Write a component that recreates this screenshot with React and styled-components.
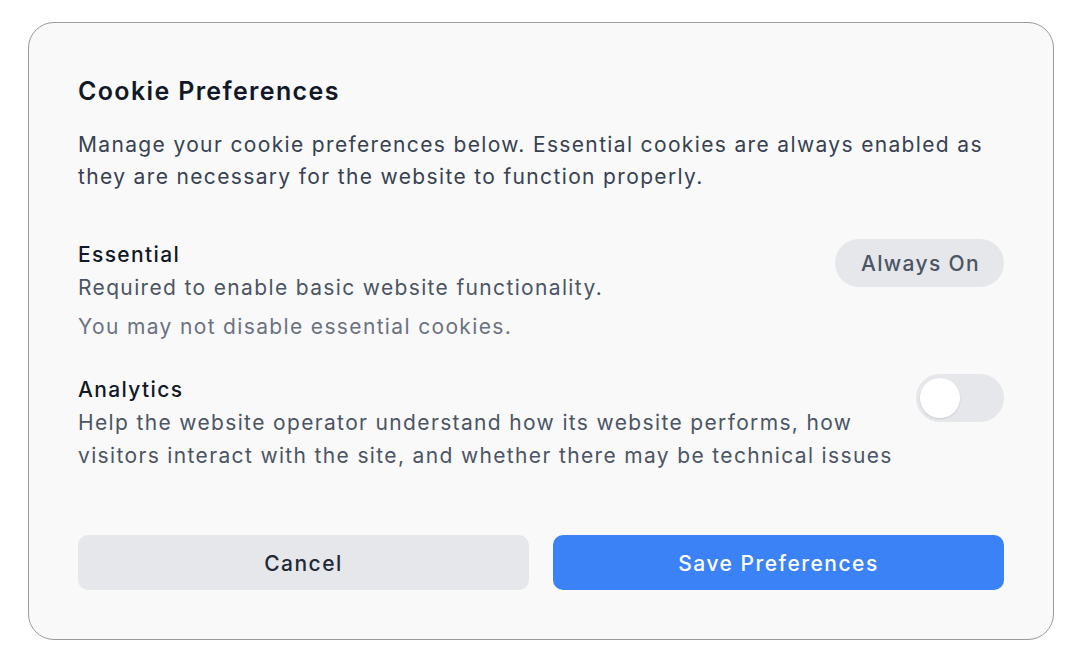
import React, { useState } from "react";
import styled, { createGlobalStyle } from "styled-components";

const GlobalStyle = createGlobalStyle`
  html, body {
    margin: 0;
    padding: 0;
    background: #ffffff;
    font-family: "Inter", "Liberation Sans", sans-serif;
  }
  * {
    box-sizing: border-box;
  }
`;

const Page = styled.div`
  padding: 22px 0 0 28px;
`;

const Card = styled.div`
  width: 1026px;
  height: 618px;
  background: #f9f9fa;
  border: 1px solid #9a9a9a;
  border-radius: 26px;
  padding: 50px 49px 49px;
  display: flex;
  flex-direction: column;
  letter-spacing: 1.35px;
`;

const Title = styled.h2`
  margin: 0;
  font-size: 25px;
  line-height: 36px;
  font-weight: 600;
  letter-spacing: 1.35px;
  color: #111827;
`;

const Intro = styled.p`
  margin: 20px 0 0;
  font-size: 21px;
  line-height: 32px;
  color: #374151;
`;

const Section = styled.div`
  display: flex;
  justify-content: space-between;
  align-items: flex-start;
  gap: 16px;
  margin-top: ${(p) => p.$top || 0}px;
`;

const SectionText = styled.div`
  display: flex;
  flex-direction: column;
  flex: 1;
`;

const SectionTitle = styled.div`
  font-size: 21px;
  line-height: 32px;
  font-weight: 500;
  color: #111827;
`;

const SectionDesc = styled.div`
  font-size: 21px;
  line-height: 33px;
  color: #4b5563;
`;

const Note = styled.div`
  margin-top: 7px;
  font-size: 21px;
  line-height: 32px;
  color: #6b7280;
`;

const Pill = styled.div`
  flex-shrink: 0;
  height: 48px;
  padding: 0 24px 0 26px;
  border-radius: 24px;
  background: #e5e7eb;
  color: #4b5563;
  font-size: 21px;
  font-weight: 500;
  display: flex;
  align-items: center;
`;

const Switch = styled.button`
  flex-shrink: 0;
  width: 88px;
  height: 48px;
  border: none;
  border-radius: 24px;
  padding: 4px;
  background: ${(p) => (p.$on ? "#3b82f6" : "#e5e7eb")};
  display: flex;
  justify-content: ${(p) => (p.$on ? "flex-end" : "flex-start")};
  cursor: pointer;
`;

const Knob = styled.span`
  width: 40px;
  height: 40px;
  border-radius: 50%;
  background: #ffffff;
  box-shadow: 0 1px 2px rgba(0, 0, 0, 0.12);
`;

const Actions = styled.div`
  margin-top: auto;
  display: grid;
  grid-template-columns: 1fr 1fr;
  gap: 24px;
`;

const Button = styled.button`
  height: 55px;
  border: none;
  border-radius: 10px;
  padding-top: 2px;
  font-family: inherit;
  font-size: 21px;
  font-weight: 500;
  letter-spacing: 1.5px;
  background: ${(p) => (p.$primary ? "#3b82f6" : "#e5e7eb")};
  color: ${(p) => (p.$primary ? "#ffffff" : "#1f2937")};
  cursor: pointer;
`;

export default function App() {
  const [analytics, setAnalytics] = useState(false);

  return (
    <Page>
      <GlobalStyle />
      <Card>
        <Title>Cookie Preferences</Title>
        <Intro>
          Manage your cookie preferences below. Essential cookies are always
          enabled as they are necessary for the website to function properly.
        </Intro>

        <Section $top={46}>
          <SectionText>
            <SectionTitle>Essential</SectionTitle>
            <SectionDesc>Required to enable basic website functionality.</SectionDesc>
            <Note>You may not disable essential cookies.</Note>
          </SectionText>
          <Pill>Always On</Pill>
        </Section>

        <Section $top={31}>
          <SectionText>
            <SectionTitle>Analytics</SectionTitle>
            <SectionDesc>
              Help the website operator understand how its website performs, how
              visitors interact with the site, and whether there may be technical
              issues
            </SectionDesc>
          </SectionText>
          <Switch $on={analytics} onClick={() => setAnalytics(!analytics)}>
            <Knob />
          </Switch>
        </Section>

        <Actions>
          <Button>Cancel</Button>
          <Button $primary>Save Preferences</Button>
        </Actions>
      </Card>
    </Page>
  );
}
